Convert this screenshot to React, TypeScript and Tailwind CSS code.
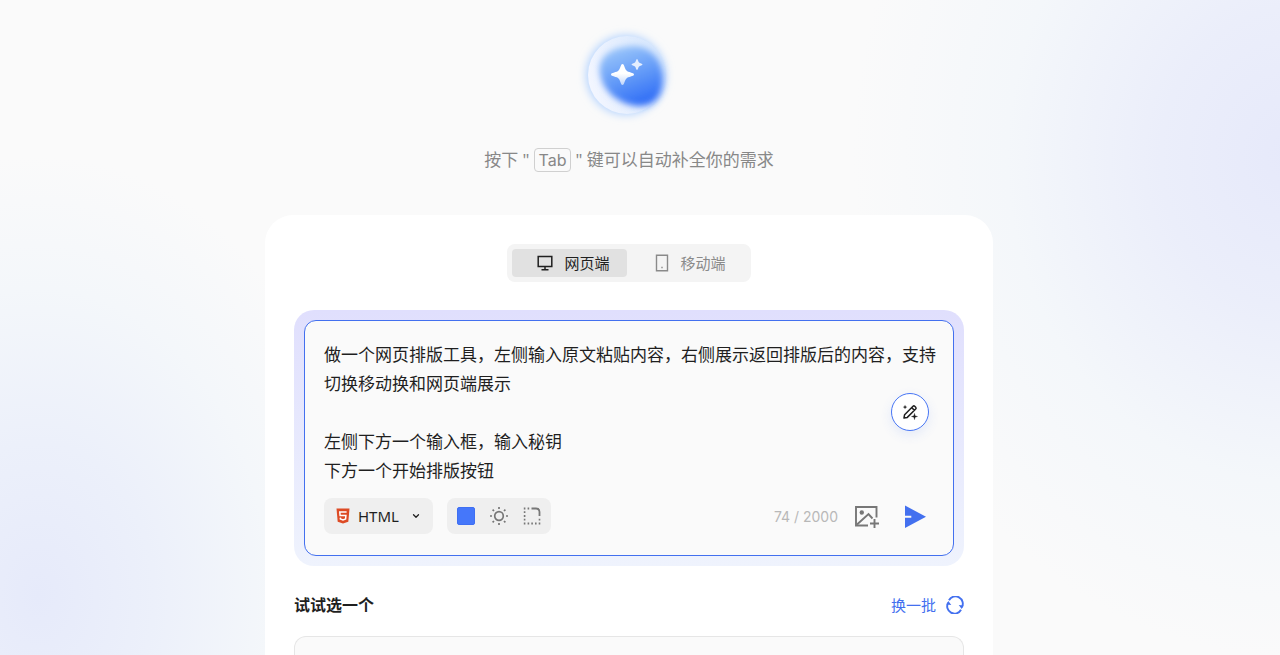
import { useState } from "react";
import { ChevronDown } from "lucide-react";

const MAX_LENGTH = 2000;

const DEFAULT_PROMPT = `做一个网页排版工具，左侧输入原文粘贴内容，右侧展示返回排版后的内容，支持切换移动换和网页端展示

左侧下方一个输入框，输入秘钥
下方一个开始排版按钮`;

function Logo() {
  return (
    <svg width="120" height="120" viewBox="0 0 120 120" aria-hidden="true">
      <defs>
        <linearGradient id="orb" x1="0.25" y1="0" x2="0.65" y2="1">
          <stop offset="0" stopColor="#9dc8fa" />
          <stop offset="0.5" stopColor="#659cf8" />
          <stop offset="1" stopColor="#2d6bf6" />
        </linearGradient>
        <linearGradient id="shell" x1="0" y1="0.6" x2="1" y2="0.3">
          <stop offset="0" stopColor="#f3f6ff" />
          <stop offset="1" stopColor="#d5e6fd" />
        </linearGradient>
        <linearGradient id="star" x1="0" y1="0" x2="0" y2="1">
          <stop offset="0.45" stopColor="#fff" />
          <stop offset="1" stopColor="#fff" stopOpacity="0.6" />
        </linearGradient>
        <filter id="glow" x="-30%" y="-30%" width="160%" height="160%">
          <feGaussianBlur stdDeviation="4" />
        </filter>
        <filter id="soft" x="-30%" y="-30%" width="160%" height="160%">
          <feGaussianBlur stdDeviation="3" />
        </filter>
        <filter id="edge" x="-10%" y="-10%" width="120%" height="120%">
          <feGaussianBlur stdDeviation="0.6" />
        </filter>
      </defs>
      <circle cx="57" cy="60" r="40" fill="#b4d3fe" filter="url(#glow)" />
      <circle cx="58" cy="60" r="39" fill="url(#shell)" filter="url(#edge)" />
      <path
        d="M55 32C76 27 92 40 94 60C95 80 86 91 70 91C50 90 33 76 31 58C29 43 40 34 55 32Z"
        fill="url(#orb)"
        filter="url(#soft)"
      />
      <path
        d="M53.500 49C55.500 49 55.500 54 57.500 55.500C59 57.500 65 57.500 65 59.500C65 61.500 59 61.500 57.500 63.500C55.500 65 55.500 70 53.500 70C51.500 70 51.500 65 49.500 63.500C48 61.500 42 61.500 42 59.500C42 57.500 48 57.500 49.500 55.500C51.500 54 51.500 49 53.500 49Z"
        fill="url(#star)"
      />
      <path
        d="M68 44C69 44 69 46.500 70 47.500C71 48.500 73.500 48.500 73.500 49.500C73.500 50.500 71 50.500 70 51.500C69 52.500 69 55 68 55C67 55 67 52.500 66 51.500C65 50.500 62.500 50.500 62.500 49.500C62.500 48.500 65 48.500 66 47.500C67 46.500 67 44 68 44Z"
        fill="#e4eefe"
      />
    </svg>
  );
}

function DesktopIcon() {
  return (
    <svg width="16" height="16" viewBox="0 0 16 16" fill="none" stroke="currentColor" strokeWidth="1.5" aria-hidden="true">
      <path d="M1.200 1.500H14.800V11.500H1.200ZM8 11.500V14.700M4.500 14.700H11.500" />
    </svg>
  );
}

function PhoneIcon() {
  return (
    <svg width="14" height="18" viewBox="0 0 14 18" fill="none" stroke="currentColor" strokeWidth="1.4" aria-hidden="true">
      <path d="M1.500 1.200H12.500V16.800H1.500Z" />
      <path d="M6.300 13.500H7.700" />
    </svg>
  );
}

function Html5Icon() {
  return (
    <svg width="14" height="16" viewBox="0 0 14 16" aria-hidden="true">
      <path d="M0.500 0.500H13.500L12.300 13.700L7 15.500L1.700 13.700Z" fill="#dd4b25" />
      <path d="M10.600 4H3.800L4.100 7.500H9.900L9.600 11L7 11.900L4.400 11L4.300 9.600" fill="none" stroke="#fff" strokeWidth="1.5" />
    </svg>
  );
}

function SunIcon() {
  return (
    <svg width="20" height="20" viewBox="0 0 20 20" fill="none" stroke="currentColor" strokeWidth="1.7" aria-hidden="true">
      <circle cx="10" cy="10" r="4.300" />
      <path d="M10 1V3M10 17V19M1 10H3M17 10H19M3.600 3.600L5 5M15 15L16.400 16.400M3.600 16.400L5 15M15 5L16.400 3.600" />
    </svg>
  );
}

function CornerIcon() {
  return (
    <svg width="18" height="18" viewBox="0 0 18 18" fill="none" stroke="currentColor" strokeWidth="1.8" aria-hidden="true">
      <path d="M8.500 1.500H13C15 1.500 16.500 3 16.500 5V9" />
      <path d="M0.800 1.500H2.400M4.600 1.500H6.200M0.800 5.200H2.400M0.800 9H2.400M0.800 12.700H2.400M0.800 16.500H2.400M4.600 16.500H6.200M8.300 16.500H9.900M12 16.500H13.600M15.700 16.500H17.300M15.700 12.700H17.300" />
    </svg>
  );
}

function MagicPenIcon() {
  return (
    <svg width="16" height="16" viewBox="0 0 16 16" fill="none" stroke="currentColor" strokeWidth="1.5" aria-hidden="true">
      <path d="M2 14L2.600 10.700L11 2.300C11.500 1.800 12.200 1.800 12.700 2.300L13.700 3.300C14.200 3.800 14.200 4.500 13.700 5L5.300 13.400ZM9.700 3.600L12.400 6.300" strokeLinejoin="round" />
      <path d="M3 0.800L3.700 2.400L5.300 3L3.700 3.700L3 5.300L2.400 3.700L0.800 3L2.400 2.400Z" fill="currentColor" stroke="none" />
      <path d="M12.500 9.300L13.200 11.800L15.600 12.500L13.200 13.200L12.500 15.700L11.800 13.200L9.400 12.500L11.800 11.800Z" fill="currentColor" strokeWidth="0.300" />
    </svg>
  );
}

function AddImageIcon() {
  return (
    <svg width="26" height="24" viewBox="0 0 26 24" fill="none" stroke="currentColor" strokeWidth="1.9" aria-hidden="true">
      <path d="M14 21.500H2V3H22.500V13.500" />
      <path d="M3 20.500L14.500 10L18.500 14.500" />
      <path d="M20.500 15V24M16 19.500H25" />
      <circle cx="7.800" cy="8.500" r="2.200" fill="currentColor" stroke="none" />
    </svg>
  );
}

function SendIcon() {
  return (
    <svg width="22" height="24" viewBox="0 0 22 24" fill="currentColor" aria-hidden="true">
      <path d="M1 1.500L22 12.800L1 24V13.800H7.300V11.800H1Z" />
    </svg>
  );
}

function RefreshIcon() {
  return (
    <svg width="18" height="18" viewBox="0 0 18 18" fill="none" stroke="currentColor" strokeWidth="1.9" aria-hidden="true">
      <path d="M3 4.200A7.300 7.300 0 0 1 15.900 11.300M15 13.800A7.300 7.300 0 0 1 2.100 6.700" />
      <path d="M12.700 9L17.500 9.500L15.700 13ZM5.300 9L0.500 8.500L2.300 5Z" fill="currentColor" stroke="none" />
    </svg>
  );
}

const DEVICES = [
  { id: "web", label: "网页端", icon: <DesktopIcon /> },
  { id: "mobile", label: "移动端", icon: <PhoneIcon /> },
];

function DeviceTabs() {
  const [device, setDevice] = useState("web");

  return (
    <div className="flex self-center rounded-lg bg-[#f4f4f4] p-[5px]">
      {DEVICES.map((item) => (
        <button
          key={item.id}
          type="button"
          aria-pressed={device === item.id}
          onClick={() => setDevice(item.id)}
          className={
            device === item.id
              ? "flex h-7 w-[115px] items-center justify-center gap-[11px] rounded bg-[#e1e1e1] pl-2 text-[15px] leading-5 text-[#1f1f1f]"
              : "flex h-7 w-[119px] items-center justify-center gap-[11px] rounded pl-2 text-[15px] leading-5 text-[#8a8a8a]"
          }
        >
          {item.icon}
          {item.label}
        </button>
      ))}
    </div>
  );
}

function PromptBox() {
  const [prompt, setPrompt] = useState(DEFAULT_PROMPT);

  return (
    <div className="mt-7 rounded-[20px] bg-linear-to-b from-[#e0dffd] to-[#eff3fd] p-[10px]">
      <div className="relative rounded-xl border border-[#4370ef] bg-[#fafafa] pt-[19px] pb-[21px]">
        <textarea
          aria-label="需求描述"
          rows={5}
          value={prompt}
          maxLength={MAX_LENGTH}
          onChange={(event) => setPrompt(event.target.value)}
          className="block w-full resize-none overflow-hidden bg-transparent pr-4 pl-[19px] text-[17px] leading-[29px] text-[#1f1f1f] outline-none"
        />
        <button
          type="button"
          aria-label="优化描述"
          className="absolute top-[72px] right-6 flex size-[38px] items-center justify-center rounded-full border border-[#4876f5] bg-white text-[#1f1f1f] shadow-[0_4px_12px_rgba(67,112,239,0.12)]"
        >
          <MagicPenIcon />
        </button>

        <div className="mt-[13px] flex items-center pr-[27px] pl-[19px]">
          <button type="button" className="flex h-9 items-center rounded-lg bg-[#efefef] px-3 text-[15px] text-[#1f1f1f]">
            <Html5Icon />
            <span className="ml-2">HTML</span>
            <ChevronDown className="ml-3 size-[10px]" strokeWidth={3} />
          </button>
          <div className="ml-[14px] flex h-9 items-center gap-[14px] rounded-lg bg-[#efefef] px-[10px] text-[#777]">
            <button type="button" aria-label="主题色" className="size-[18px] rounded-xs border border-[#3f6ff2] bg-[#4577fa]" />
            <button type="button" aria-label="明暗模式">
              <SunIcon />
            </button>
            <button type="button" aria-label="圆角">
              <CornerIcon />
            </button>
          </div>
          <span className="ml-auto font-[Inter] text-[14px] text-[#b8b8b8]">
            {prompt.length} / {MAX_LENGTH}
          </span>
          <button type="button" aria-label="添加图片" className="ml-4 text-[#777]">
            <AddImageIcon />
          </button>
          <button type="button" aria-label="发送" className="ml-6 text-[#4370ef]">
            <SendIcon />
          </button>
        </div>
      </div>
    </div>
  );
}

export default function App() {
  return (
    <div className="flex min-h-screen flex-col items-center bg-[#fafafa] bg-[radial-gradient(440px_500px_at_101%_24%,#e6e9fa_0%,#ebeefa_30%,#f4f7fa_65%,#fafafa00_100%),radial-gradient(330px_440px_at_3%_91%,#e6eafa_0%,#ecf0fa_35%,#f4f7fa_70%,#fafafa00_100%)] pt-[15px] pr-[22px] font-['Noto_Sans','Noto_Sans_CJK_SC',sans-serif]">
      <Logo />
      <p className="mt-3 flex items-center text-[17px] leading-[26px] text-[#888]">
        按下 "
        <kbd className="mx-1 rounded border border-[#d0d0d0] px-1 font-[Inter] text-[16px] leading-[22px]">Tab</kbd>
        " 键可以自动补全你的需求
      </p>

      <main className="mt-[42px] flex w-full max-w-[728px] flex-1 flex-col rounded-t-[28px] bg-white px-[29px] pt-[29px]">
        <DeviceTabs />
        <PromptBox />

        <div className="mt-7 flex items-center justify-between leading-[22px]">
          <h2 className="text-[16px] font-bold text-[#1f1f1f]">试试选一个</h2>
          <button type="button" className="flex items-center gap-[10px] text-[15px] text-[#4370ef]">
            换一批
            <RefreshIcon />
          </button>
        </div>
        <div className="mt-5 min-h-4 flex-1 rounded-t-xl border border-b-0 border-[#e6e6e6] bg-[#fafafa]" />
      </main>
    </div>
  );
}
